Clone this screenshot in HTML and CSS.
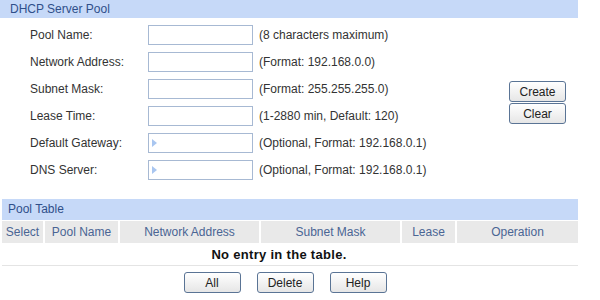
FILE: index.html
```html
<!DOCTYPE html>
<html lang="en">
<head>
  <meta charset="UTF-8">
  <title>DHCP Server Pool</title>
  <link rel="stylesheet" href="styles.css">
</head>
<body>
  <div class="page">
    <!-- Formulario del pool -->
    <div class="bar">DHCP Server Pool</div>
    <div class="pool-form">
      <div class="fields">
        <label>Pool Name:</label>
        <span class="box"><input type="text"></span>
        <span class="hint">(8 characters maximum)</span>

        <label>Network Address:</label>
        <span class="box"><input type="text"></span>
        <span class="hint">(Format: 192.168.0.0)</span>

        <label>Subnet Mask:</label>
        <span class="box"><input type="text"></span>
        <span class="hint">(Format: 255.255.255.0)</span>

        <label>Lease Time:</label>
        <span class="box"><input type="text"></span>
        <span class="hint">(1-2880 min, Default: 120)</span>

        <label>Default Gateway:</label>
        <span class="box opt"><input type="text"></span>
        <span class="hint">(Optional, Format: 192.168.0.1)</span>

        <label>DNS Server:</label>
        <span class="box opt"><input type="text"></span>
        <span class="hint">(Optional, Format: 192.168.0.1)</span>
      </div>
      <div class="side-btns">
        <button class="btn">Create</button>
        <button class="btn">Clear</button>
      </div>
    </div>

    <!-- Tabla de pools -->
    <div class="bar bar-table">Pool Table</div>
    <table class="pool-table">
      <thead>
        <tr>
          <th class="c-sel">Select</th>
          <th class="c-name">Pool Name</th>
          <th class="c-net">Network Address</th>
          <th class="c-mask">Subnet Mask</th>
          <th class="c-lease">Lease</th>
          <th class="c-op">Operation</th>
        </tr>
      </thead>
      <tbody>
        <tr>
          <td colspan="6" class="empty">No entry in the table.</td>
        </tr>
      </tbody>
    </table>

    <div class="bottom-btns">
      <button class="btn">All</button>
      <button class="btn">Delete</button>
      <button class="btn">Help</button>
    </div>
  </div>
</body>
</html>
```

FILE: styles.css
```css
/* === BASE === */
* {
  margin: 0;
  padding: 0;
  box-sizing: border-box;
}
body {
  font-family: "Liberation Sans", Arial, sans-serif;
  font-size: 12px;
  color: #333;
  background: #fff;
}
.page {
  width: 580px;
}

/* === BARRAS DE TITULO === */
.bar {
  width: 578px;
  height: 18px;
  line-height: 18px;
  padding-left: 10px;
  background: #c6d9f8;
  color: #2f4f8a;
}
.bar-table {
  margin-top: 16px;
  margin-left: 2px;
  width: 576px;
  height: 21px;
  line-height: 21px;
  padding-left: 6px;
}

/* === FORMULARIO === */
.pool-form {
  display: flex;
  padding-top: 3px;
}
.fields {
  display: grid;
  grid-template-columns: 118px 105px auto;
  grid-auto-rows: 27px;
  align-items: center;
  padding-left: 30px;
  width: 509px;
}
.box {
  position: relative;
  display: block;
  height: 20px;
}
.box input {
  width: 105px;
  height: 20px;
  border: 1px solid #a7b9d3;
  outline: none;
  background: #fff;
}
.opt::before {
  content: "";
  position: absolute;
  left: 4px;
  top: 6px;
  border-left: 5px solid #a9c6f0;
  border-top: 4px solid transparent;
  border-bottom: 4px solid transparent;
}
.hint {
  padding-left: 6px;
  white-space: nowrap;
}
.side-btns {
  display: flex;
  flex-direction: column;
  gap: 1px;
  padding-top: 60px;
}

/* === BOTONES === */
.btn {
  width: 57px;
  height: 21px;
  font-family: "Liberation Sans", Arial, sans-serif;
  font-size: 12px;
  color: #222;
  background: linear-gradient(#ffffff, #e6e6e6);
  border: 1px solid #5a7495;
  border-radius: 3px;
}

/* === TABLA === */
.pool-table {
  border-collapse: separate;
  border-spacing: 2px 0;
  width: 580px;
  margin-top: 1px;
}
.pool-table th {
  height: 22px;
  background: #e9e9e9;
  color: #4a6594;
  font-weight: normal;
  text-align: center;
}
.c-sel { width: 41px; }
.c-name { width: 73px; }
.c-net { width: 139px; }
.c-mask { width: 139px; }
.c-lease { width: 53px; }
.c-op { width: 121px; }
.pool-table td.empty {
  height: 23px;
  font-weight: bold;
  font-size: 13px;
  letter-spacing: 0.3px;
  color: #111;
  text-align: center;
  padding-right: 22px;
  border-bottom: 1px solid #e4e4e4;
}
.bottom-btns {
  display: flex;
  justify-content: center;
  gap: 16px;
  width: 570px;
  margin-top: 6px;
}
```
